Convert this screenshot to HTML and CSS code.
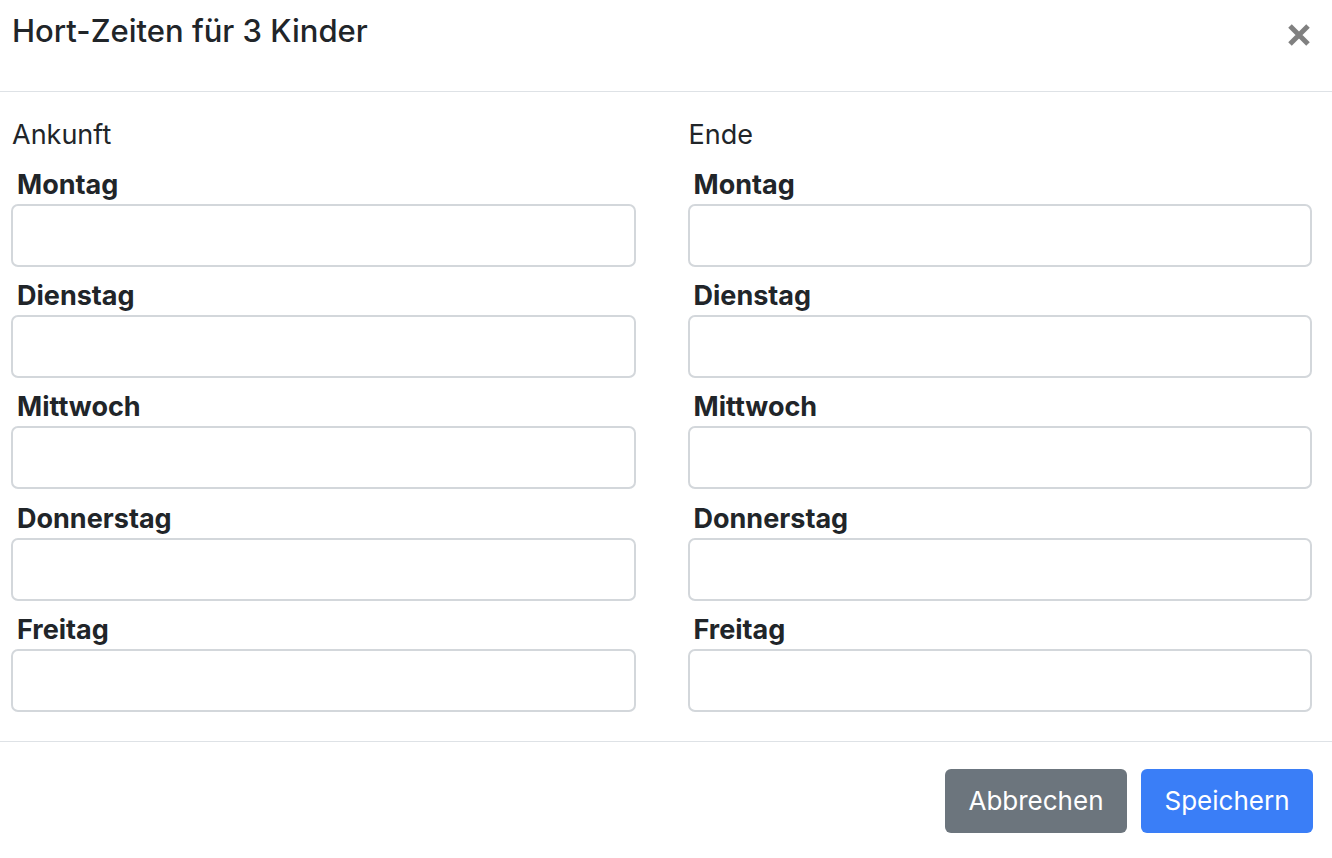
FILE: index.html
```html
<!DOCTYPE html>
<html lang="de">
<head>
<meta charset="utf-8">
<title>Hort-Zeiten</title>
<link rel="stylesheet" href="styles.css">
</head>
<body>
<div class="modal">
  <header class="modal-header">
    <h5 class="modal-title">Hort-Zeiten für 3 Kinder</h5>
    <button class="close" type="button" aria-label="Close">
      <svg width="24" height="24" viewBox="0 0 24 24"><path d="M3 3 L21 21 M21 3 L3 21" stroke="#808080" stroke-width="5" stroke-linecap="butt"/></svg>
    </button>
  </header>
  <main class="modal-body">
    <section class="col">
      <div class="col-title">Ankunft</div>
      <div class="field"><label>Montag</label><input class="form-control" type="text"></div>
      <div class="field"><label>Dienstag</label><input class="form-control" type="text"></div>
      <div class="field"><label>Mittwoch</label><input class="form-control" type="text"></div>
      <div class="field"><label>Donnerstag</label><input class="form-control" type="text"></div>
      <div class="field"><label>Freitag</label><input class="form-control" type="text"></div>
    </section>
    <section class="col">
      <div class="col-title">Ende</div>
      <div class="field"><label>Montag</label><input class="form-control" type="text"></div>
      <div class="field"><label>Dienstag</label><input class="form-control" type="text"></div>
      <div class="field"><label>Mittwoch</label><input class="form-control" type="text"></div>
      <div class="field"><label>Donnerstag</label><input class="form-control" type="text"></div>
      <div class="field"><label>Freitag</label><input class="form-control" type="text"></div>
    </section>
  </main>
  <footer class="modal-footer">
    <button class="btn btn-secondary" type="button">Abbrechen</button>
    <button class="btn btn-primary" type="button">Speichern</button>
  </footer>
</div>
</body>
</html>
```

FILE: styles.css
```css
* { box-sizing: border-box; }
html, body { margin: 0; padding: 0; background: #fff; }
body {
  font-family: Inter, "Noto Sans", "Liberation Sans", sans-serif;
  color: #212529;
  font-size: 27px;
}
.modal { width: 1332px; }
.modal-header {
  height: 92px;
  border-bottom: 1px solid #dee2e6;
  display: flex;
  align-items: flex-start;
  justify-content: space-between;
  padding: 0 20px 0 12px;
}
.modal-title {
  margin: 0;
  margin-top: 13px;
  font-size: 31px;
  font-weight: 500;
  line-height: 36px;
}
.close {
  background: none;
  border: 0;
  padding: 0;
  margin-top: 23px;
  margin-right: 1px;
  width: 24px;
  height: 24px;
  cursor: pointer;
}
.close svg { display: block; }
.modal-body {
  display: grid;
  grid-template-columns: 1fr 1fr;
  column-gap: 52px;
  padding: 28px 20px 29px 11px;
  border-bottom: 1px solid #dee2e6;
}
.col { display: flex; flex-direction: column; }
.col-title {
  line-height: 30px;
  padding-left: 1px;
  margin-bottom: 4px;
}
.field { display: flex; flex-direction: column; }
.field label {
  font-weight: 700;
  line-height: 30px;
  margin-top: 14.25px;
  margin-bottom: 4px;
  padding-left: 6px;
}
.col-title + .field label { margin-top: 15.75px; }
.form-control {
  height: 63px;
  width: 100%;
  border: 2px solid #d3d7db;
  border-radius: 7px;
  font: inherit;
  background: #fff;
  margin: 0;
}
.modal-footer {
  display: flex;
  justify-content: flex-end;
  gap: 14px;
  padding: 27px 19px 25px 0;
}
.btn {
  height: 64px;
  border: 0;
  border-radius: 6px;
  font: inherit;
  font-size: 26px;
  color: #fff;
  padding: 0 23.5px;
  line-height: 64px;
  cursor: pointer;
}
.btn-secondary { background: #6c757d; }
.btn-primary { background: #3a7ef7; }
```
